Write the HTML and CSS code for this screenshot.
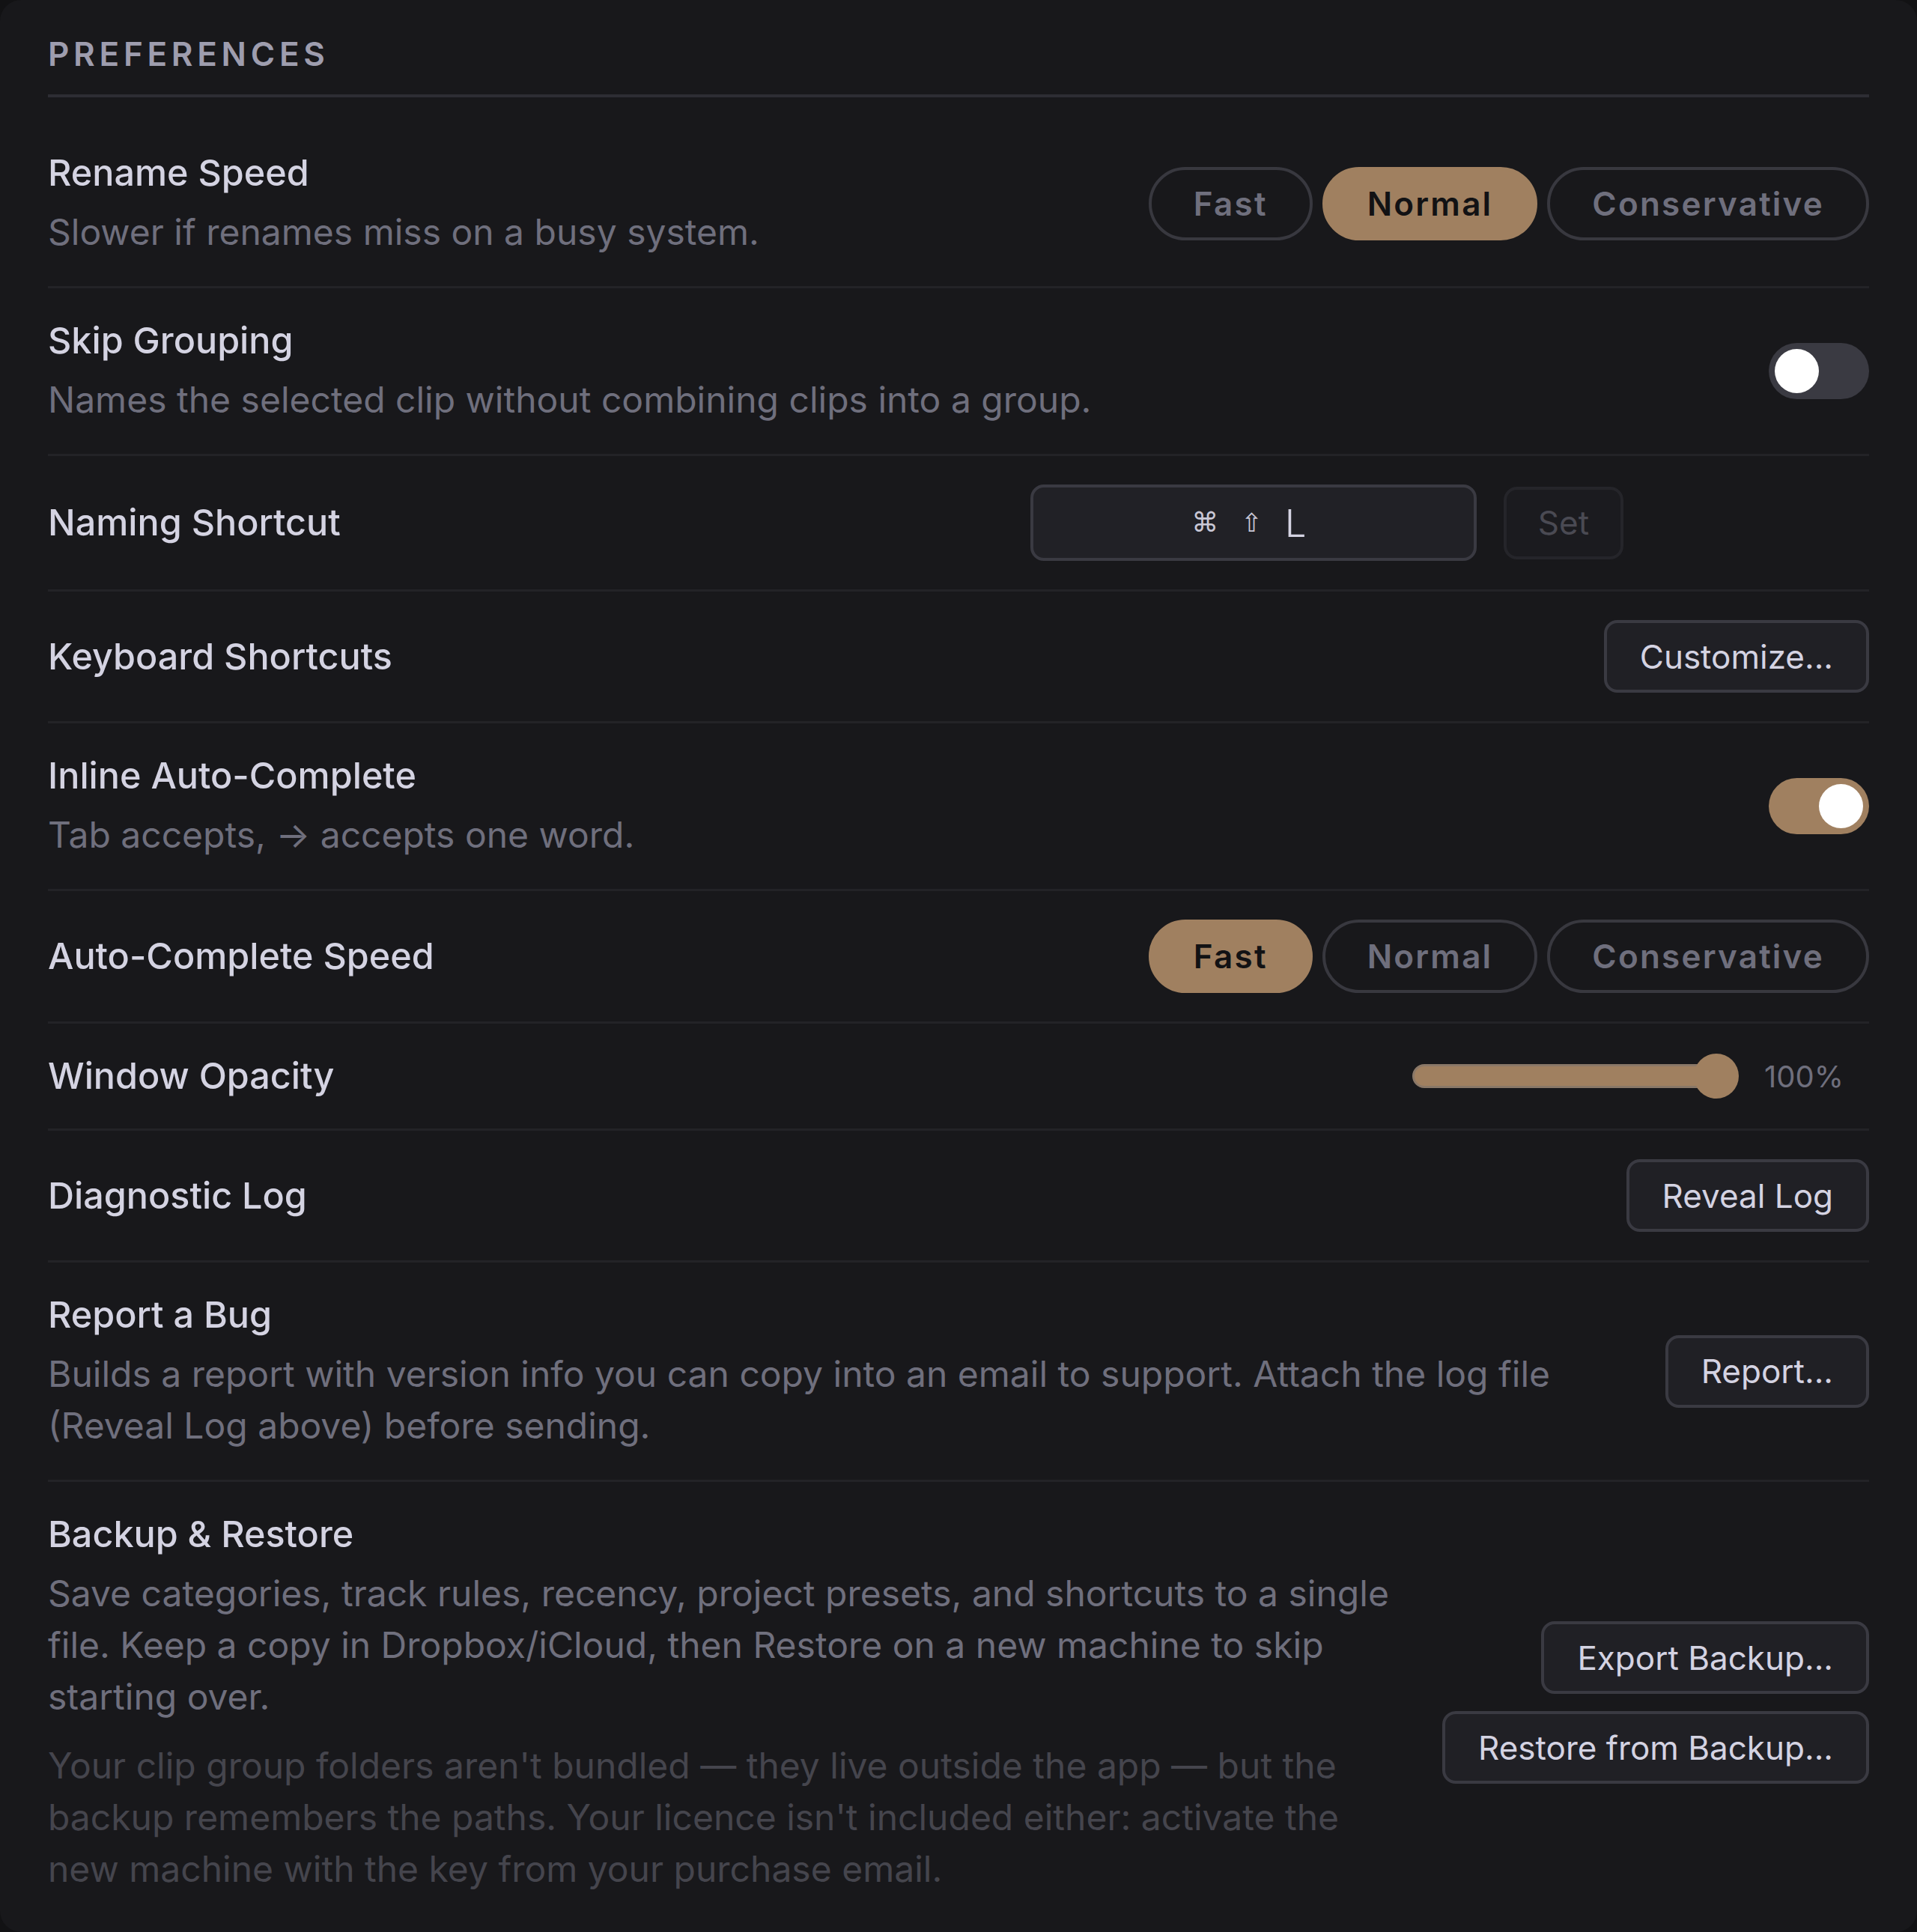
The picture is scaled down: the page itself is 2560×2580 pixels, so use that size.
FILE: index.html
```html
<!DOCTYPE html>
<html lang="en">
<head>
<meta charset="utf-8">
<title>Preferences</title>
<link rel="stylesheet" href="styles.css">
</head>
<body>
<div class="panel">
  <h1 class="heading">PREFERENCES</h1>
  <div class="rows">
    <div class="row">
      <div class="info">
        <div class="title">Rename Speed</div>
        <div class="desc">Slower if renames miss on a busy system.</div>
      </div>
      <div class="seg">
        <button class="seg-btn">Fast</button>
        <button class="seg-btn active">Normal</button>
        <button class="seg-btn">Conservative</button>
      </div>
    </div>

    <div class="row">
      <div class="info">
        <div class="title">Skip Grouping</div>
        <div class="desc">Names the selected clip without combining clips into a group.</div>
      </div>
      <div class="toggle"><span class="knob"></span></div>
    </div>

    <div class="row">
      <div class="info">
        <div class="title">Naming Shortcut</div>
      </div>
      <div class="shortcut-group">
        <div class="shortcut-field">
          <span class="mod">⌘</span><span class="mod shift">⇧</span><span class="key">L</span>
        </div>
        <button class="btn btn-disabled">Set</button>
      </div>
    </div>

    <div class="row">
      <div class="info">
        <div class="title">Keyboard Shortcuts</div>
      </div>
      <button class="btn">Customize...</button>
    </div>

    <div class="row">
      <div class="info">
        <div class="title">Inline Auto-Complete</div>
        <div class="desc">Tab accepts, → accepts one word.</div>
      </div>
      <div class="toggle on"><span class="knob"></span></div>
    </div>

    <div class="row">
      <div class="info">
        <div class="title">Auto-Complete Speed</div>
      </div>
      <div class="seg">
        <button class="seg-btn active">Fast</button>
        <button class="seg-btn">Normal</button>
        <button class="seg-btn">Conservative</button>
      </div>
    </div>

    <div class="row">
      <div class="info">
        <div class="title">Window Opacity</div>
      </div>
      <div class="slider-group">
        <div class="slider">
          <div class="track"></div>
          <div class="thumb"></div>
        </div>
        <span class="slider-value">100%</span>
      </div>
    </div>

    <div class="row">
      <div class="info">
        <div class="title">Diagnostic Log</div>
      </div>
      <button class="btn">Reveal Log</button>
    </div>

    <div class="row">
      <div class="info">
        <div class="title">Report a Bug</div>
        <div class="desc">Builds a report with version info you can copy into an email to support. Attach the log file (Reveal Log above) before sending.</div>
      </div>
      <button class="btn">Report...</button>
    </div>

    <div class="row">
      <div class="info">
        <div class="title">Backup &amp; Restore</div>
        <div class="desc">Save categories, track rules, recency, project presets, and shortcuts to a single file. Keep a copy in Dropbox/iCloud, then Restore on a new machine to skip starting over.</div>
        <div class="note">Your clip group folders aren't bundled — they live outside the app — but the backup remembers the paths. Your licence isn't included either: activate the new machine with the key from your purchase email.</div>
      </div>
      <div class="btn-stack">
        <button class="btn">Export Backup...</button>
        <button class="btn">Restore from Backup...</button>
      </div>
    </div>
  </div>
</div>
</body>
</html>
```

FILE: styles.css
```css
* { box-sizing: border-box; }

html, body {
  margin: 0;
  padding: 0;
  background: #121214;
}

body {
  font-family: "Inter", "DejaVu Sans", "Noto Sans", sans-serif;
  color: #d4d3e2;
}

.panel {
  width: 2560px;
  min-height: 2580px;
  background: #18181b;
  border-radius: 28px;
  padding: 44px 64px 0;
}

.heading {
  margin: 0 0 31px;
  padding: 0 0 26px;
  font-size: 44px;
  line-height: 56px;
  font-weight: 600;
  letter-spacing: 0.13em;
  color: #9e9dae;
  border-bottom: 4px solid #2d2d34;
}

.rows {
  display: flex;
  flex-direction: column;
}

.row {
  display: flex;
  align-items: center;
  justify-content: space-between;
  gap: 56px;
  padding: 38px 0;
  border-bottom: 3px solid #232327;
}

.row:last-child {
  border-bottom: none;
}

.info {
  flex: 1;
  min-width: 0;
  display: flex;
  flex-direction: column;
}

.title {
  font-size: 48.5px;
  line-height: 64px;
  font-weight: 500;
  color: #d4d3e2;
}

.desc {
  margin-top: 12px;
  font-size: 48px;
  line-height: 69px;
  color: #6f6f7d;
}

.note {
  margin-top: 23px;
  font-size: 48px;
  line-height: 69px;
  color: #45454d;
}

/* segmented control */
.seg {
  display: flex;
  gap: 13px;
  flex-shrink: 0;
}

.seg-btn {
  height: 98px;
  padding: 0 56px;
  border: 4px solid #38383f;
  border-radius: 50px;
  background: transparent;
  font-family: inherit;
  font-size: 44px;
  font-weight: 600;
  letter-spacing: 0.05em;
  color: #6f6f7d;
}

.seg-btn.active {
  background: #a08060;
  border-color: #a08060;
  color: #121214;
}

/* toggle */
.toggle {
  flex-shrink: 0;
  width: 134px;
  height: 75px;
  border-radius: 38px;
  background: #3a3a42;
  padding: 8px;
  display: flex;
  justify-content: flex-start;
}

.toggle.on {
  background: #a08060;
  justify-content: flex-end;
}

.knob {
  width: 59px;
  height: 59px;
  border-radius: 50%;
  background: #ffffff;
}

/* buttons */
.btn {
  flex-shrink: 0;
  height: 97px;
  padding: 0 44px;
  border: 4px solid #3a3a42;
  border-radius: 18px;
  background: #202025;
  font-family: inherit;
  font-size: 44px;
  font-weight: 400;
  color: #d4d3e2;
  white-space: nowrap;
}

.btn-disabled {
  width: 160px;
  padding: 0;
  border-color: #25252a;
  background: #1b1b1f;
  color: #4a4a53;
}

.btn-stack {
  flex-shrink: 0;
  display: flex;
  flex-direction: column;
  align-items: flex-end;
  gap: 23px;
}

/* shortcut recorder */
.shortcut-group {
  flex-shrink: 0;
  width: 1120px;
  display: flex;
  align-items: center;
  gap: 36px;
}

.shortcut-field {
  width: 596px;
  height: 102px;
  padding-right: 12px;
  border: 4px solid #3a3a42;
  border-radius: 18px;
  background: #212126;
  display: flex;
  align-items: center;
  justify-content: center;
  gap: 30px;
  color: #c9c8d6;
}

.mod {
  font-family: "DejaVu Sans", sans-serif;
  font-size: 36px;
  line-height: 1;
}

.shift {
  font-size: 34px;
}

.key {
  font-size: 51px;
  font-weight: 300;
  line-height: 1;
  color: #d4d3e2;
}

/* slider */
.slider-group {
  flex-shrink: 0;
  display: flex;
  align-items: center;
  gap: 30px;
}

.slider {
  position: relative;
  width: 440px;
  height: 60px;
  display: flex;
  align-items: center;
}

.track {
  width: 430px;
  height: 32px;
  border-radius: 16px;
  background: #a08060;
  border: 3px solid #8a7868;
}

.thumb {
  position: absolute;
  right: 4px;
  top: 0;
  width: 60px;
  height: 60px;
  border-radius: 50%;
  background: #a08060;
}

.slider-value {
  width: 140px;
  font-size: 40px;
  color: #6f6f7d;
}
```
